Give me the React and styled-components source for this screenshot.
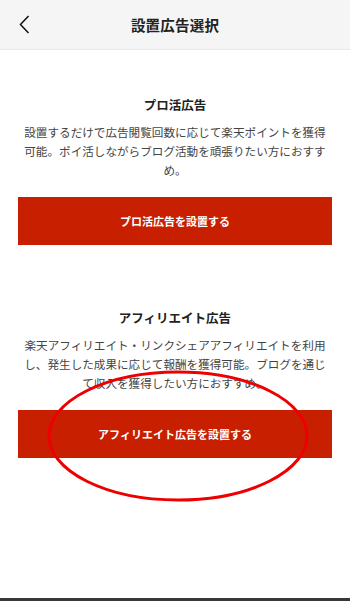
import React from "react";
import styled, { createGlobalStyle } from "styled-components";

const GlobalStyle = createGlobalStyle`
  html, body {
    margin: 0;
    padding: 0;
    background: #ffffff;
  }
  body {
    font-family: "Noto Sans CJK JP", "Noto Sans", sans-serif;
    color: #333333;
  }
`;

const sections = [
  {
    title: "プロ活広告",
    lines: [
      "設置するだけで広告閲覧回数に応じて楽天ポイントを獲得",
      "可能。ポイ活しながらブログ活動を頑張りたい方におすす",
      "め。",
    ],
    button: "プロ活広告を設置する",
  },
  {
    title: "アフィリエイト広告",
    lines: [
      "楽天アフィリエイト・リンクシェアアフィリエイトを利用",
      "し、発生した成果に応じて報酬を獲得可能。ブログを通じ",
      "て収入を獲得したい方におすすめ。",
    ],
    button: "アフィリエイト広告を設置する",
    circled: true,
  },
];

const App = () => {
  return (
    <Page>
      <GlobalStyle />
      <Header>
        <BackButton aria-label="戻る">
          <svg width="11" height="19" viewBox="0 0 11 19" fill="none">
            <path d="M9.5 1 L1.5 9.5 L9.5 18" stroke="#111" strokeWidth="1.5" />
          </svg>
        </BackButton>
        <Title>設置広告選択</Title>
        <span />
      </Header>

      <Main>
        {sections.map((s) => (
          <Section key={s.title}>
            <SectionTitle>{s.title}</SectionTitle>
            <Description>
              {s.lines.map((l, i) => (
                <React.Fragment key={i}>
                  {l}
                  {i < s.lines.length - 1 && <br />}
                </React.Fragment>
              ))}
            </Description>
            <ButtonWrap>
              <SetupButton type="button">{s.button}</SetupButton>
              {s.circled && (
                <Circle viewBox="0 0 266 136" fill="none">
                  <ellipse cx="133" cy="68" rx="129" ry="64" stroke="#ee0000" strokeWidth="3" />
                </Circle>
              )}
            </ButtonWrap>
          </Section>
        ))}
      </Main>

      <BottomBar />
    </Page>
  );
};

export default App;

const Page = styled.div`
  min-height: 100vh;
  display: flex;
  flex-direction: column;
`;

const Header = styled.header`
  height: 49px;
  display: grid;
  grid-template-columns: 50px 1fr 50px;
  align-items: center;
  background: #f5f5f5;
  border-bottom: 1px solid #e8e8e8;
`;

const BackButton = styled.button`
  border: none;
  background: none;
  padding: 0 0 0 19px;
  height: 100%;
  display: flex;
  align-items: center;
  cursor: pointer;
`;

const Title = styled.h1`
  margin: 0;
  text-align: center;
  font-size: 14.5px;
  font-weight: 700;
  color: #222;
  letter-spacing: 0.2px;
`;

const Main = styled.main`
  padding: 45px 18px 0;
  display: flex;
  flex-direction: column;
  gap: 63px;
`;

const Section = styled.section`
  display: flex;
  flex-direction: column;
  align-items: center;
`;

const SectionTitle = styled.h2`
  margin: 0;
  font-size: 12.5px;
  line-height: 20px;
  font-weight: 700;
  color: #222;
`;

const Description = styled.p`
  margin: 8px 0 0;
  font-size: 11.6px;
  line-height: 19px;
  color: #444;
  text-align: center;
  white-space: nowrap;
`;

const ButtonWrap = styled.div`
  position: relative;
  width: 100%;
  margin-top: 17px;
`;

const SetupButton = styled.button`
  display: block;
  width: 100%;
  height: 48px;
  border: none;
  background: #c81f00;
  color: #fff;
  font-family: inherit;
  font-size: 11px;
  font-weight: 700;
  cursor: pointer;
`;

const Circle = styled.svg`
  position: absolute;
  left: 27px;
  top: -42px;
  width: 266px;
  height: 136px;
  pointer-events: none;
`;

const BottomBar = styled.div`
  margin-top: auto;
  height: 3px;
  background: #383838;
`;
